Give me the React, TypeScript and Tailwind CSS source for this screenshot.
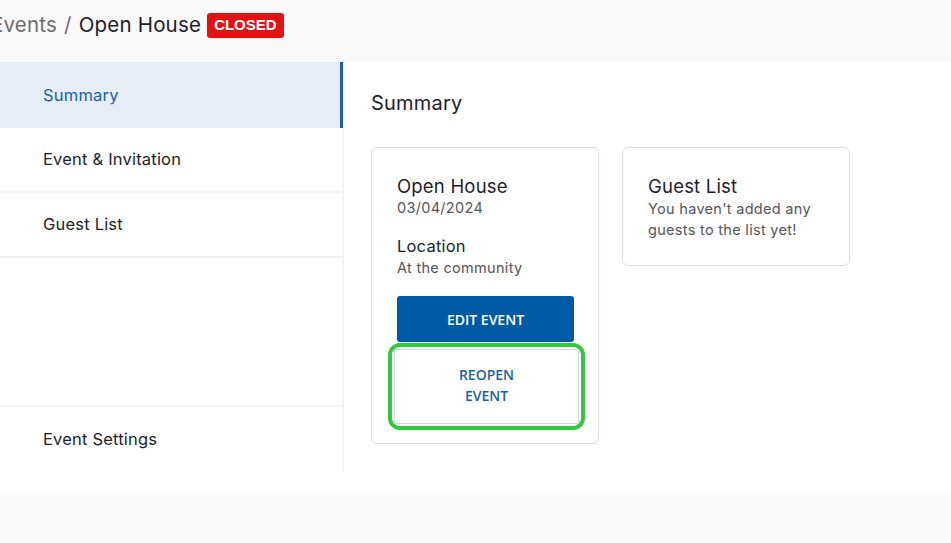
import React from 'react';

type NavItem = { label: string; active?: boolean };

const topItems: NavItem[] = [
  { label: 'Summary', active: true },
  { label: 'Event & Invitation' },
  { label: 'Guest List' },
];

const font = { fontFamily: 'Inter, "Noto Sans", sans-serif' };

function SideLink({ item }: { item: NavItem }) {
  return (
    <div
      className={
        item.active
          ? 'h-[66px] flex items-center pl-[43px] bg-[#e6edf5] text-[#1a62a8] border-r-[3px] border-[#1a62a8] -mr-px text-[16.5px] tracking-[0.2px]'
          : 'h-[65px] flex items-center pl-[43px] border-b-2 border-[#f3f3f3] text-[#1d1d2b] text-[16.5px] tracking-[0.2px]'
      }
    >
      {item.label}
    </div>
  );
}

export default function App() {
  return (
    <div className="w-[951px] h-[543px] bg-[#f9f9f9] overflow-hidden" style={font}>
      {/* breadcrumb */}
      <header className="h-[62px] flex items-center -ml-[9px] pb-[12px] gap-[7px] text-[20.5px] tracking-[0.2px]">
        <span className="text-[#6d6d72]">Events</span>
        <span className="text-[#6d6d72]">/</span>
        <span className="text-[#1d1d2b]">Open House</span>
        <span
          className="ml-[-1px] h-[25px] px-[7px] flex items-center rounded-[3px] bg-[#e21212] text-white text-[15px] font-bold tracking-normal"
          style={{ fontFamily: '"Liberation Sans", Arial, sans-serif' }}
        >
          CLOSED
        </span>
      </header>

      <div className="flex bg-white h-[433px]">
        {/* sidebar */}
        <aside className="w-[344px] h-[410px] border-r-2 border-[#f3f3f3] flex flex-col">
          {topItems.map((it) => (
            <SideLink key={it.label} item={it} />
          ))}
          <div className="flex-1 border-b-2 border-[#f3f3f3]" />
          <div className="h-[65px] flex items-center pl-[43px] text-[#1d1d2b] text-[16.5px] tracking-[0.2px]">
            Event Settings
          </div>
        </aside>

        {/* content */}
        <main className="flex-1 pl-[27px] pt-[28px]">
          <h2 className="text-[20px] text-[#1d1d2b] leading-[26px] tracking-[0.2px]">Summary</h2>
          <div className="mt-[31px] flex items-start gap-[23px]">
            <div className="w-[228px] h-[297px] border border-[#dcdce4] rounded-[6px] pl-[25px] pr-[24px] pt-[26px]">
              <div className="text-[18.5px] leading-[24px] text-[#1d1d2b] tracking-[0.2px]">Open House</div>
              <div className="text-[14.5px] leading-[20px] text-[#55555c] tracking-[0.3px]">03/04/2024</div>
              <div className="mt-[17px] text-[16.5px] leading-[22px] text-[#1d1d2b] tracking-[0.2px]">Location</div>
              <div className="text-[14.5px] leading-[22px] text-[#55555c] tracking-[0.3px]">At the community</div>
              <button
                className="mt-[17px] w-[177px] h-[46px] rounded-[3px] bg-[#005ba4] text-white text-[14px] font-semibold"
                style={{ fontFamily: '"Open Sans", sans-serif' }}
              >
                EDIT EVENT
              </button>
              <div className="-ml-[9px] mt-[1px] w-[197px] h-[87px] rounded-[12px] border-[4px] border-[#33c93d] p-[2px]">
                <button
                  className="w-full h-full pb-[3px] border border-[#d5d5de] rounded-[2px] bg-white text-[#1a62a8] text-[14px] leading-[21px] font-semibold"
                  style={{ fontFamily: '"Open Sans", sans-serif' }}
                >
                  REOPEN
                  <br />
                  EVENT
                </button>
              </div>
            </div>

            <div className="w-[228px] h-[119px] border border-[#dcdce4] rounded-[6px] pl-[25px] pr-[14px] pt-[26px]">
              <div className="text-[18.5px] leading-[24px] text-[#1d1d2b] tracking-[0.2px]">Guest List</div>
              <div className="text-[14.5px] leading-[21px] text-[#55555c] tracking-[0.3px]">
                You haven't added any guests to the list yet!
              </div>
            </div>
          </div>
        </main>
      </div>
    </div>
  );
}
